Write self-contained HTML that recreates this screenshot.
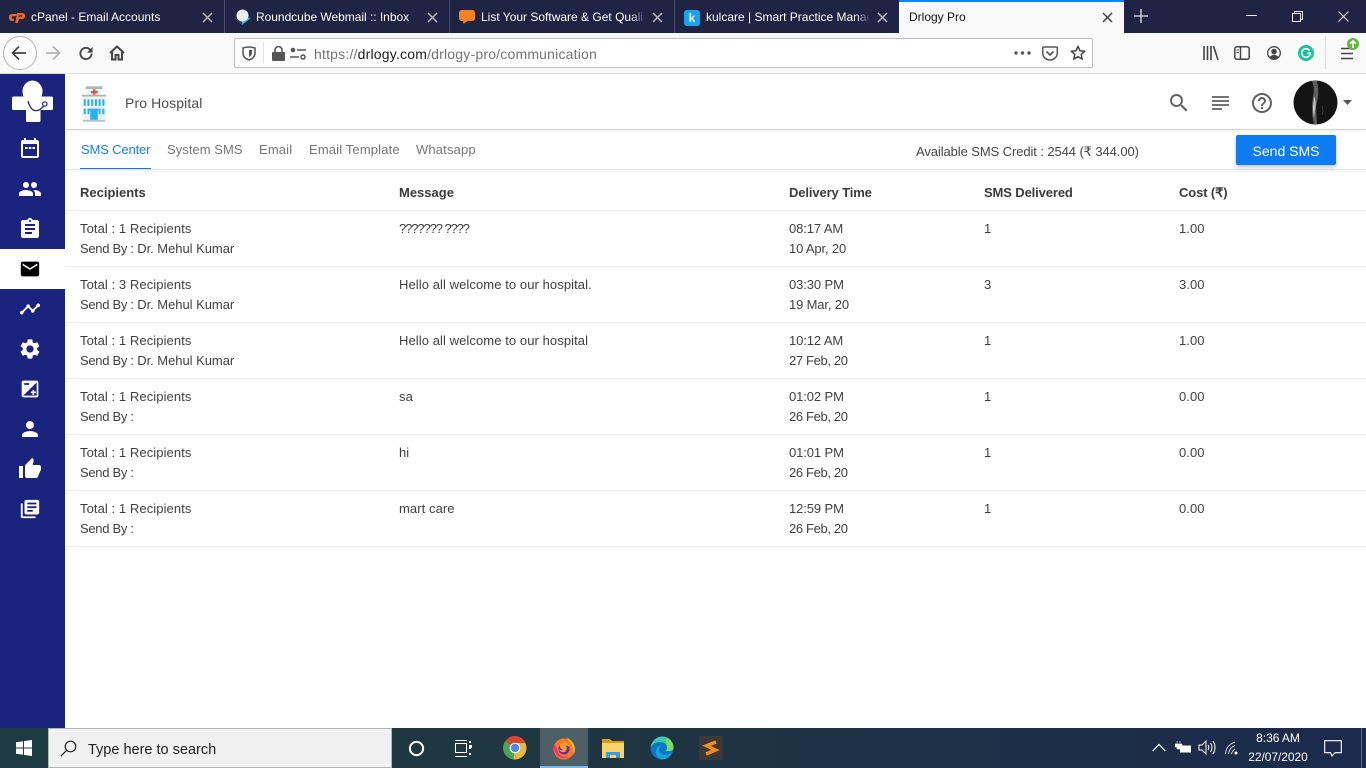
<!DOCTYPE html>
<html><head><meta charset="utf-8"><title>Drlogy Pro</title>
<style>
html,body{margin:0;padding:0;width:1366px;height:768px;overflow:hidden;background:#fff;font-family:"Liberation Sans",sans-serif}
.a{position:absolute;white-space:nowrap}
svg{position:absolute;display:block}
.tab{position:absolute;top:0;height:33px;color:#fff;font-size:12px;line-height:35px;white-space:nowrap}
.sep{position:absolute;top:0;width:1px;height:33px;background:#4a4e6b}
.x{position:absolute;top:11px;width:11px;height:11px}
.t{position:absolute;white-space:nowrap;font-size:13px;line-height:16px;color:#3f3f3f;letter-spacing:.08px}
.h{position:absolute;white-space:nowrap;font-size:13px;line-height:16px;color:#3b3b3b;font-weight:bold;top:185px;letter-spacing:-.12px}
.l{position:absolute;left:66px;width:1300px;height:1px;background:#e9ecef}
.n{position:absolute;white-space:nowrap;top:142px;font-size:13px;line-height:16px;color:#757575;letter-spacing:.15px}
.sb{letter-spacing:-.04px}.sb span{letter-spacing:-.3px}
.tm{letter-spacing:-.1px}.d1{letter-spacing:-.15px}.d2{letter-spacing:-.35px}
</style></head><body>

<!-- tab bar -->
<div class="a" style="left:0;top:0;width:1366px;height:33px;background:#1f2344"></div>
<div class="sep" style="left:224px"></div><div class="sep" style="left:449px"></div><div class="sep" style="left:674px"></div>
<div class="a" style="left:899px;top:0;width:225px;height:33px;background:#f9f9fa"></div>
<div class="a" style="left:899px;top:0;width:225px;height:2px;background:#0a84ff"></div>

<svg style="left:9px;top:13px" width="16" height="10" viewBox="0 0 16 10"><path d="M3 1h5l-.7 2.200H4q-1.200 0-1.200 1.300T4 5.800h1.300L4.600 8H3Q0 8 0 4.500T3 1z" fill="#f26522"/><path fill-rule="evenodd" d="M8.200 0H13q3 0 3 3t-3 3H10L8.800 10H6.200zM9.900 2.200l-.5 1.600h3q.9 0 .9-.9 0-.7-.9-.7z" fill="#f26522"/></svg>
<div class="tab" style="left:31px">cPanel - Email Accounts</div>
<svg class="x" style="left:202px;top:12px" viewBox="0 0 11 11"><path d="M1 1l9 9M10 1l-9 9" stroke="#b9bac6" stroke-width="1.500"/></svg>

<svg style="left:234px;top:9px" width="17" height="17" viewBox="0 0 17 17"><path d="M0 9l8 7V8z" fill="#37474f"/><path d="M8 16l9-7-9-2z" fill="#37a6e8"/><circle cx="8.500" cy="6.500" r="6" fill="#e9eef1"/></svg>
<div class="tab" style="left:256px;letter-spacing:-.03px">Roundcube Webmail :: Inbox</div>
<svg class="x" style="left:427px;top:12px" viewBox="0 0 11 11"><path d="M1 1l9 9M10 1l-9 9" stroke="#b9bac6" stroke-width="1.500"/></svg>

<svg style="left:459px;top:10px" width="16" height="14" viewBox="0 0 16 14"><path d="M3 0h10q3 0 3 3v5q0 3-3 3H8.500L4.500 14l-.5-3H3q-3 0-3-3V3q0-3 3-3z" fill="#f58220"/></svg>
<div class="tab" style="left:481px;width:163px;overflow:hidden">List Your Software &amp; Get Qualif</div>
<div class="a" style="left:630px;top:8px;width:16px;height:20px;background:linear-gradient(90deg,rgba(31,35,68,0),#1f2344)"></div>
<svg class="x" style="left:652px;top:12px" viewBox="0 0 11 11"><path d="M1 1l9 9M10 1l-9 9" stroke="#b9bac6" stroke-width="1.500"/></svg>

<div class="a" style="left:684px;top:10px;width:16px;height:16px;border-radius:3px;background:#12a5f4;color:#fff;font-size:12px;font-weight:bold;line-height:16px;text-align:center">k</div>
<div class="tab" style="left:706px;width:163px;overflow:hidden">kulcare | Smart Practice Manag</div>
<div class="a" style="left:856px;top:8px;width:14px;height:20px;background:linear-gradient(90deg,rgba(31,35,68,0),#1f2344)"></div>
<svg class="x" style="left:877px;top:12px" viewBox="0 0 11 11"><path d="M1 1l9 9M10 1l-9 9" stroke="#b9bac6" stroke-width="1.500"/></svg>

<div class="tab" style="left:909px;color:#111">Drlogy Pro</div>
<svg class="x" style="left:1102px;top:12px" viewBox="0 0 11 11"><path d="M1 1l9 9M10 1l-9 9" stroke="#444" stroke-width="1.500"/></svg>
<svg style="left:1134px;top:9px" width="14" height="14" viewBox="0 0 14 14"><path d="M7 0v14M0 7h14" stroke="#c4c5d0" stroke-width="1.600"/></svg>
<svg style="left:1246px;top:15px" width="11" height="2"><rect width="11" height="1" fill="#e8e8ee"/></svg>
<svg style="left:1292px;top:11px" width="11" height="11" viewBox="0 0 11 11"><path d="M.5 2.500h8v8h-8zM2.500 2.500v-2h8v8h-2" fill="none" stroke="#e8e8ee"/></svg>
<svg style="left:1338px;top:11px" width="11" height="11" viewBox="0 0 11 11"><path d="M.5.500l10 10M10.500.500l-10 10" stroke="#e8e8ee"/></svg>

<!-- toolbar -->
<div class="a" style="left:0;top:33px;width:1366px;height:40px;background:#f9f9fa"></div>
<div class="a" style="left:0;top:73px;width:1366px;height:1px;background:#dcdcde"></div>
<div class="a" style="left:3px;top:36px;width:32px;height:32px;border:1px solid #b5b5b6;border-radius:50%;background:#fbfbfb"></div>
<svg style="left:11px;top:45px" width="16" height="16" viewBox="0 0 16 16"><path d="M15 8H2M8 1.500L1.500 8 8 14.500" fill="none" stroke="#444" stroke-width="1.700"/></svg>
<svg style="left:45px;top:45px" width="16" height="16" viewBox="0 0 16 16"><path d="M1 8h13M8 1.500L14.500 8 8 14.500" fill="none" stroke="#b4b4b5" stroke-width="1.700"/></svg>
<svg style="left:78px;top:46px" width="16" height="15" viewBox="0 0 16 16"><path d="M14 8a6 6 0 1 1-2-4.500L14 5.500" fill="none" stroke="#444" stroke-width="2"/><path d="M15 1v6H9z" fill="#444"/></svg>
<svg style="left:109px;top:45px" width="16" height="16" viewBox="0 0 16 16"><path d="M1 8l7-6.500L15 8M3 7v7.500h3.500V10h3v4.500H13V7" fill="none" stroke="#444" stroke-width="2"/></svg>

<div class="a" style="left:234px;top:38px;width:857px;height:28px;background:#fff;border:1px solid #bcbcbd;border-radius:2px"></div>
<svg style="left:242px;top:46px" width="14" height="15" viewBox="0 0 14 15"><path d="M1 2q6-2 12 0v5q0 5-6 7-6-2-6-7z" fill="none" stroke="#555" stroke-width="1.500"/><path d="M7 4h3v3q0 2.500-3 4z" fill="#555"/></svg>
<div class="a" style="left:263px;top:42px;width:1px;height:21px;background:#e2e2e3"></div>
<svg style="left:272px;top:46px" width="13" height="15" viewBox="0 0 13 15"><path d="M3 6V4a3.500 3.500 0 0 1 7 0v2" fill="none" stroke="#555" stroke-width="1.600"/><rect y="6" width="13" height="9" rx="1" fill="#555"/></svg>
<svg style="left:290px;top:47px" width="16" height="13" viewBox="0 0 16 13"><circle cx="3" cy="3" r="2.300" fill="#555"/><path d="M7 3h9M0 10h9" stroke="#555" stroke-width="1.500"/><circle cx="13" cy="10" r="2" fill="none" stroke="#555" stroke-width="1.500"/></svg>
<div class="a" style="left:314px;top:46px;font-size:14px;line-height:17px;color:#737373;letter-spacing:.2px">https://<span style="color:#1c1c1c">drlogy.com</span>/drlogy-pro/communication</div>
<svg style="left:1014px;top:51px" width="17" height="4"><circle cx="2" cy="2" r="1.700" fill="#555"/><circle cx="8.500" cy="2" r="1.700" fill="#555"/><circle cx="15" cy="2" r="1.700" fill="#555"/></svg>
<svg style="left:1042px;top:46px" width="16" height="15" viewBox="0 0 16 15"><path d="M1.500 1h13q.8 0 .8.8V7a7.300 7 0 0 1-14.600 0V1.800q0-.8.8-.8z" fill="none" stroke="#555" stroke-width="1.500"/><path d="M4.500 5.500L8 9l3.500-3.500" fill="none" stroke="#555" stroke-width="1.600"/></svg>
<svg style="left:1070px;top:45px" width="16" height="16" viewBox="0 0 16 16"><path d="M8 1.300l2 4.400 4.800.5-3.600 3.200 1 4.700L8 11.700l-4.200 2.400 1-4.700L1.200 6.200 6 5.700z" fill="none" stroke="#444" stroke-width="1.500" stroke-linejoin="round"/></svg>

<svg style="left:1203px;top:46px" width="16" height="14" viewBox="0 0 16 14"><path d="M1 0v14M4.500 0v14M8 0v14M10.500 0l4.500 14" stroke="#444" stroke-width="1.600"/></svg>
<svg style="left:1234px;top:46px" width="16" height="14" viewBox="0 0 16 14"><rect x=".8" y=".8" width="14.400" height="12.400" rx="2" fill="none" stroke="#444" stroke-width="1.500"/><path d="M6.500 1v12" stroke="#444" stroke-width="1.500"/><path d="M2.500 4h2.500M2.500 6.500h2.500" stroke="#444"/></svg>
<svg style="left:1267px;top:46px" width="14" height="14" viewBox="0 0 14 14"><circle cx="7" cy="7" r="6.300" fill="none" stroke="#444" stroke-width="1.300"/><circle cx="7" cy="5.500" r="2.800" fill="#444"/><path d="M2.500 11q4.500-4.500 9 0-4.500 3.500-9 0z" fill="#444"/></svg>
<svg style="left:1298px;top:45px" width="16" height="16" viewBox="0 0 16 16"><circle cx="8" cy="8" r="8" fill="#15c39a"/><path d="M11.500 5.500A4.300 4.300 0 1 0 12.300 8H9.500" fill="none" stroke="#fff" stroke-width="1.600"/></svg>
<div class="a" style="left:1325px;top:36px;width:1px;height:33px;background:#e0e0e1"></div>
<svg style="left:1341px;top:47px" width="12" height="13" viewBox="0 0 12 13"><path d="M0 1.500h12M0 6.500h12M0 11.500h12" stroke="#444" stroke-width="1.500"/></svg>
<svg style="left:1347px;top:38px" width="12" height="12" viewBox="0 0 12 12"><circle cx="6" cy="6" r="6" fill="#5fb83d"/><path d="M6 10V3M3 5.800L6 2.800l3 3" fill="none" stroke="#fff" stroke-width="1.500"/></svg>

<!-- sidebar -->
<div class="a" style="left:0;top:74px;width:65px;height:654px;background:#1a237e"></div>
<svg style="left:0;top:74px" width="65" height="56" viewBox="0 0 65 56">
<ellipse cx="32.500" cy="17.500" rx="10" ry="11" fill="#fff"/>
<path d="M13.500 22.500H51.500q1.500 0 1.500 1.500V34.500q0 1.500-1.500 1.500H40.500V46.500q0 1.500-1.500 1.500H27.500q-1.500 0-1.500-1.500V36H13.500Q12 36 12 34.500V24q0-1.500 1.500-1.500z" fill="#fff"/>
<path d="M28 27q2 8 6.500 9.500 5 1 9-4.500" fill="none" stroke="#1a237e" stroke-width="1.300"/><circle cx="44.800" cy="30" r="2.200" fill="#fff" stroke="#1a237e" stroke-width="1.200"/>
</svg>
<svg style="left:18px;top:137px" width="24" height="24" viewBox="0 0 24 24"><path fill="#fff" d="M19 3h-1V1h-2v2H8V1H6v2H5C3.900 3 3 3.900 3 5v14c0 1.100.9 2 2 2h14c1.100 0 2-.9 2-2V5c0-1.100-.9-2-2-2z"/><path fill="#1a237e" d="M5 7h14v12H5z"/><path fill="#fff" d="M7 10h2.500v2H7zM10.800 10h2.500v2h-2.500zM14.500 10H17v2h-2.500z"/></svg>
<svg style="left:18px;top:177px" width="24" height="24" viewBox="0 0 24 24"><path fill="#fff" d="M16 11c1.660 0 2.990-1.340 2.990-3S17.660 5 16 5c-1.660 0-3 1.340-3 3s1.340 3 3 3zm-8 0c1.660 0 2.990-1.340 2.990-3S9.660 5 8 5C6.340 5 5 6.340 5 8s1.340 3 3 3zm0 2c-2.330 0-7 1.170-7 3.500V19h14v-2.500c0-2.330-4.670-3.500-7-3.500zm8 0c-.29 0-.62.02-.97.05 1.160.84 1.970 1.970 1.970 3.450V19h6v-2.500c0-2.330-4.670-3.500-7-3.500z"/></svg>
<svg style="left:18px;top:217px" width="24" height="24" viewBox="0 0 24 24"><path fill="#fff" d="M19 3h-4.180C14.400 1.840 13.300 1 12 1c-1.300 0-2.400.84-2.820 2H5c-1.100 0-2 .9-2 2v14c0 1.100.9 2 2 2h14c1.100 0 2-.9 2-2V5c0-1.100-.9-2-2-2zm-7 0c.55 0 1 .45 1 1s-.45 1-1 1-1-.45-1-1 .45-1 1-1zm2 14H7v-2h7v2zm3-4H7v-2h10v2zm0-4H7V7h10v2z"/></svg>
<div class="a" style="left:0;top:249px;width:65px;height:40px;background:#fff"></div>
<svg style="left:19px;top:258px" width="22" height="22" viewBox="0 0 24 24"><path fill="#000" d="M20 4H4c-1.100 0-1.990.9-1.990 2L2 18c0 1.100.9 2 2 2h16c1.100 0 2-.9 2-2V6c0-1.100-.9-2-2-2zm0 4l-8 5-8-5V6l8 5 8-5v2z"/></svg>
<svg style="left:19px;top:298px" width="22" height="22" viewBox="0 0 24 24"><path fill="#fff" d="M23 8c0 1.100-.9 2-2 2-.18 0-.35-.02-.51-.07l-3.560 3.550c.05.16.07.34.07.52 0 1.100-.9 2-2 2s-2-.9-2-2c0-.18.02-.36.07-.52l-2.550-2.550c-.16.05-.34.07-.52.07s-.36-.02-.52-.07l-4.550 4.560c.05.16.07.33.07.51 0 1.100-.9 2-2 2s-2-.9-2-2 .9-2 2-2c.18 0 .35.02.51.07l4.560-4.550C8.020 9.360 8 9.180 8 9c0-1.100.9-2 2-2s2 .9 2 2c0 .18-.02.36-.07.52l2.550 2.550c.16-.05.34-.07.52-.07s.36.02.52.07l3.550-3.560C19.020 8.350 19 8.180 19 8c0-1.100.9-2 2-2s2 .9 2 2z"/></svg>
<svg style="left:18px;top:337px" width="24" height="24" viewBox="0 0 24 24"><path fill="#fff" d="M19.140 12.940c.04-.3.06-.61.06-.94 0-.32-.02-.64-.07-.94l2.030-1.580c.18-.14.23-.41.12-.61l-1.920-3.320c-.12-.22-.37-.29-.59-.22l-2.390.96c-.5-.38-1.030-.7-1.620-.94l-.36-2.540c-.04-.24-.24-.41-.48-.41h-3.840c-.24 0-.43.17-.47.41l-.36 2.540c-.59.24-1.130.57-1.620.94l-2.390-.96c-.22-.08-.47 0-.59.22L2.740 8.870c-.12.21-.08.47.12.61l2.030 1.580c-.05.3-.09.63-.09.94s.02.64.07.94l-2.030 1.580c-.18.14-.23.41-.12.61l1.920 3.320c.12.22.37.29.59.22l2.390-.96c.5.38 1.030.7 1.620.94l.36 2.540c.05.24.24.41.48.41h3.840c.24 0 .44-.17.47-.41l.36-2.540c.59-.24 1.130-.56 1.620-.94l2.390.96c.22.08.47 0 .59-.22l1.920-3.320c.12-.22.07-.47-.12-.61l-2.010-1.580zM12 15.600c-1.980 0-3.600-1.620-3.600-3.600s1.620-3.600 3.600-3.600 3.600 1.620 3.600 3.600-1.620 3.600-3.600 3.600z"/></svg>
<svg style="left:20px;top:379px" width="20" height="20" viewBox="0 0 24 24"><path fill="#fff" d="M15 17v2h2v-2h2v-2h-2v-2h-2v2h-2v2h2zm5-15H4c-1.100 0-2 .9-2 2v16c0 1.100.9 2 2 2h16c1.100 0 2-.9 2-2V4c0-1.100-.9-2-2-2zM5 5h6v2H5V5zm15 15H4L20 4v16z"/></svg>
<svg style="left:18px;top:417px" width="24" height="24" viewBox="0 0 24 24"><path fill="#fff" d="M12 12c2.210 0 4-1.790 4-4s-1.790-4-4-4-4 1.790-4 4 1.790 4 4 4zm0 2c-2.670 0-8 1.340-8 4v2h16v-2c0-2.660-5.330-4-8-4z"/></svg>
<svg style="left:18px;top:457px" width="24" height="24" viewBox="0 0 24 24"><path fill="#fff" d="M1 21h4V9H1v12zm22-11c0-1.100-.9-2-2-2h-6.310l.95-4.570.03-.32c0-.41-.17-.79-.44-1.060L14.170 1 7.590 7.590C7.220 7.950 7 8.450 7 9v10c0 1.100.9 2 2 2h9c.83 0 1.540-.5 1.840-1.220l3.020-7.050c.09-.23.14-.47.14-.73v-2z"/></svg>
<svg style="left:19px;top:498px" width="22" height="22" viewBox="0 0 24 24"><path fill="#fff" d="M4 6H2v14c0 1.100.9 2 2 2h14v-2H4V6zm16-4H8c-1.100 0-2 .9-2 2v12c0 1.100.9 2 2 2h12c1.100 0 2-.9 2-2V4c0-1.100-.9-2-2-2zm-1 9H9V9h10v2zm-4 4H9v-2h6v2zm4-8H9V5h10v2z"/></svg>

<!-- header -->
<svg style="left:81px;top:84px" width="27" height="40" viewBox="0 0 29 40">
<rect x="5" y="1" width="18" height="3" fill="#a9b8be"/><rect x="7" y="4" width="14" height="6" fill="#eaf3f6"/>
<path d="M13 4h2.500v2H18v2.500h-2.500V11H13V8.500h-2.500V6H13z" fill="#f0512d"/>
<rect x="1" y="11" width="26" height="27" fill="#eef4f6"/><rect x="1" y="10" width="26" height="2" fill="#a9b8be"/>
<path d="M4 15v7M8 15v7M12 15v7M16 15v7M20 15v7M24 15v7M4 25v6M8 25v6M20 25v6M24 25v6" stroke="#29b0ee" stroke-width="2.200"/>
<rect x="10" y="27" width="8" height="10" fill="#29b0ee"/><rect x="9" y="25" width="10" height="2" fill="#29b0ee"/>
<rect x="2" y="37" width="24" height="2" fill="#b4c2c8"/></svg>
<div class="a" style="left:125px;top:95px;font-size:14px;line-height:17px;color:#4a4a4a;letter-spacing:.1px">Pro Hospital</div>
<div class="a" style="left:66px;top:129px;width:1300px;height:1px;background:#d4d4d4;box-shadow:0 1px 2px rgba(0,0,0,.12)"></div>
<svg style="left:1167px;top:91px" width="24" height="24" viewBox="0 0 24 24"><path fill="#616161" d="M15.500 14h-.79l-.28-.27C15.410 12.590 16 11.110 16 9.500 16 5.910 13.090 3 9.500 3S3 5.910 3 9.500 5.910 16 9.500 16c1.610 0 3.090-.59 4.230-1.570l.27.28v.79l5 4.990L20.490 19l-4.990-5zm-6 0C7.010 14 5 11.990 5 9.500S7.010 5 9.500 5 14 7.010 14 9.500 11.990 14 9.500 14z"/></svg>
<svg style="left:1212px;top:96px" width="17" height="14" viewBox="0 0 17 14"><path d="M0 1h17M0 5h17M0 9h17M0 13h10" stroke="#616161" stroke-width="1.700"/></svg>
<svg style="left:1250px;top:91px" width="24" height="24" viewBox="0 0 24 24"><path fill="#616161" d="M11 18h2v-2h-2v2zm1-16C6.480 2 2 6.480 2 12s4.480 10 10 10 10-4.480 10-10S17.520 2 12 2zm0 18c-4.410 0-8-3.590-8-8s3.590-8 8-8 8 3.590 8 8-3.590 8-8 8zm0-14c-2.210 0-4 1.790-4 4h2c0-1.100.9-2 2-2s2 .9 2 2c0 2-3 1.750-3 5h2c0-2.250 3-2.500 3-5 0-2.210-1.790-4-4-4z"/></svg>
<svg style="left:1293px;top:80px" width="45" height="45" viewBox="0 0 45 45"><circle cx="22.500" cy="22.500" r="22" fill="#141414"/><path d="M19 1q3 8 1 16l-1 10q0 10 2 17h3l-1-17 2-10q1-8-1-16z" fill="#5e5e5e"/><path d="M21 16l-1 11q0 7 1 11l1.500-12q.5-6-1.500-10z" fill="#c4c4c4"/><path d="M29 26q2 5 0 9" fill="none" stroke="#3a3a3a"/></svg>
<svg style="left:1343px;top:100px" width="9" height="5"><path d="M0 0h9L4.500 5z" fill="#555"/></svg>

<!-- subnav -->
<div class="n" style="left:81px;color:#1a7df0;letter-spacing:-.15px">SMS Center</div>
<div class="a" style="left:80px;top:168px;width:71px;height:2px;background:#0d7bf2"></div>
<div class="n" style="left:167px;letter-spacing:.05px">System SMS</div>
<div class="n" style="left:259px">Email</div>
<div class="n" style="left:309px">Email Template</div>
<div class="n" style="left:416px">Whatsapp</div>
<div class="a" style="left:66px;top:169px;width:1300px;height:1px;background:#e4e4e4;box-shadow:0 1px 2px rgba(0,0,0,.1)"></div>
<div class="t" style="left:916px;top:144px;color:#444;letter-spacing:-.09px">Available SMS Credit : 2544 (₹ 344.00)</div>
<div class="a" style="left:1236px;top:135px;width:100px;height:30px;background:#0d7bf2;border-radius:2px;box-shadow:0 2px 4px rgba(0,0,0,.25);color:#fff;font-size:14px;line-height:32px;text-align:center">Send SMS</div>

<!-- table -->
<div class="h" style="left:80px;letter-spacing:0">Recipients</div>
<div class="h" style="left:399px;letter-spacing:0">Message</div>
<div class="h" style="left:789px">Delivery Time</div>
<div class="h" style="left:984px">SMS Delivered</div>
<div class="h" style="left:1179px">Cost (₹)</div>
<div class="l" style="top:210px"></div><div class="l" style="top:266px"></div><div class="l" style="top:322px"></div><div class="l" style="top:378px"></div><div class="l" style="top:434px"></div><div class="l" style="top:490px"></div><div class="l" style="top:546px"></div>

<div class="t" style="left:80px;top:221px">Total : 1 Recipients</div><div class="t sb" style="left:80px;top:241px"><span>Send By :</span> Dr. Mehul Kumar</div>
<div class="t" style="left:399px;top:221px;letter-spacing:-1.100px">??????? ????</div>
<div class="t tm" style="left:789px;top:221px">08:17 AM</div><div class="t d1" style="left:789px;top:241px">10 Apr, 20</div>
<div class="t" style="left:984px;top:221px">1</div><div class="t" style="left:1179px;top:221px">1.00</div>

<div class="t" style="left:80px;top:277px">Total : 3 Recipients</div><div class="t sb" style="left:80px;top:297px"><span>Send By :</span> Dr. Mehul Kumar</div>
<div class="t" style="left:399px;top:277px">Hello all welcome to our hospital.</div>
<div class="t tm" style="left:789px;top:277px">03:30 PM</div><div class="t d1" style="left:789px;top:297px">19 Mar, 20</div>
<div class="t" style="left:984px;top:277px">3</div><div class="t" style="left:1179px;top:277px">3.00</div>

<div class="t" style="left:80px;top:333px">Total : 1 Recipients</div><div class="t sb" style="left:80px;top:353px"><span>Send By :</span> Dr. Mehul Kumar</div>
<div class="t" style="left:399px;top:333px">Hello all welcome to our hospital</div>
<div class="t tm" style="left:789px;top:333px">10:12 AM</div><div class="t d2" style="left:789px;top:353px">27 Feb, 20</div>
<div class="t" style="left:984px;top:333px">1</div><div class="t" style="left:1179px;top:333px">1.00</div>

<div class="t" style="left:80px;top:389px">Total : 1 Recipients</div><div class="t sb" style="left:80px;top:409px"><span>Send By :</span></div>
<div class="t" style="left:399px;top:389px">sa</div>
<div class="t tm" style="left:789px;top:389px">01:02 PM</div><div class="t d2" style="left:789px;top:409px">26 Feb, 20</div>
<div class="t" style="left:984px;top:389px">1</div><div class="t" style="left:1179px;top:389px">0.00</div>

<div class="t" style="left:80px;top:445px">Total : 1 Recipients</div><div class="t sb" style="left:80px;top:465px"><span>Send By :</span></div>
<div class="t" style="left:399px;top:445px">hi</div>
<div class="t tm" style="left:789px;top:445px">01:01 PM</div><div class="t d2" style="left:789px;top:465px">26 Feb, 20</div>
<div class="t" style="left:984px;top:445px">1</div><div class="t" style="left:1179px;top:445px">0.00</div>

<div class="t" style="left:80px;top:501px">Total : 1 Recipients</div><div class="t sb" style="left:80px;top:521px"><span>Send By :</span></div>
<div class="t" style="left:399px;top:501px">mart care</div>
<div class="t tm" style="left:789px;top:501px">12:59 PM</div><div class="t d2" style="left:789px;top:521px">26 Feb, 20</div>
<div class="t" style="left:984px;top:501px">1</div><div class="t" style="left:1179px;top:501px">0.00</div>

<!-- taskbar -->
<div class="a" style="left:0;top:728px;width:1366px;height:40px;background:linear-gradient(90deg,#1e3a42 0,#1e3640 40%,#1d2f48 75%,#1c2a4c 100%)"></div>
<svg style="left:16px;top:740px" width="16" height="16" viewBox="0 0 16 16"><path d="M0 2.300l7-1V7.500H0zM8 1.100L16 0v7.500H8zM0 8.500h7v6.200l-7-1zM8 8.500h8V16l-8-1.100z" fill="#fff"/></svg>
<div class="a" style="left:48px;top:728px;width:344px;height:40px;background:#f1f1f1;border:1px solid #b4b6b8;box-sizing:border-box"></div>
<svg style="left:60px;top:740px" width="17" height="17" viewBox="0 0 17 17"><circle cx="10.500" cy="6.500" r="5.300" fill="none" stroke="#222" stroke-width="1.200"/><path d="M6.800 10.200L.8 16.200" stroke="#222" stroke-width="1.300"/></svg>
<div class="a" style="left:88px;top:741px;font-size:14.500px;line-height:18px;color:#222">Type here to search</div>

<svg style="left:408px;top:740px" width="17" height="17"><circle cx="8.500" cy="8.500" r="6.600" fill="none" stroke="#fff" stroke-width="2"/></svg>
<svg style="left:455px;top:740px" width="18" height="17" viewBox="0 0 18 17"><path d="M0 .5h12M0 16.500h12" stroke="#fff"/><rect x=".5" y="3.500" width="11" height="9" fill="none" stroke="#fff"/><path d="M15 1v2M15 7v2M15 13v2" stroke="#fff" stroke-width="2"/><rect x="14" y="5" width="3" height="3" fill="#fff"/></svg>

<svg style="left:503px;top:736px" width="24" height="24" viewBox="0 0 24 24"><circle cx="12" cy="12" r="11.500" fill="#e8b93a"/><path d="M12 12L2 5.500A11.500 11.500 0 0 1 22.500 7H12z" fill="#d84434"/><path d="M12 12l-10-6.500A11.500 11.500 0 0 0 10.500 23.400z" fill="#4aa657"/><circle cx="12" cy="12" r="5.300" fill="#fff"/><circle cx="12" cy="12" r="4.200" fill="#4f86ec"/></svg>

<div class="a" style="left:540px;top:728px;width:48px;height:40px;background:#4f5f68"></div>
<div class="a" style="left:540px;top:766px;width:48px;height:2px;background:#76b9ed"></div>
<svg style="left:552px;top:736px" width="24" height="24" viewBox="0 0 24 24"><circle cx="12" cy="13" r="10.500" fill="#ff7a1f"/><path d="M2 8q-1 8 4 12 6 4 13 1-10 2-13-5-1-4-4-8z" fill="#f0336a"/><path d="M14 1q6 3 8.500 9 1 5-1 8Q22 9 14 1z" fill="#ffcb32"/><circle cx="12" cy="13" r="5.500" fill="#5b2fb0"/><path d="M8 8q7-4 10 3-2-2-4-1 2 3-1 6-5 1-6-3 2 2 4 1-4-2-3-6z" fill="#ff9a2a"/></svg>

<svg style="left:602px;top:738px" width="22" height="20" viewBox="0 0 22 20"><path d="M0 1h8l2 2h12v3H0z" fill="#d69e1e"/><rect y="5" width="22" height="15" fill="#fbd267"/><path d="M4 20v-6h14v6h-4v-3H8v3z" fill="#3d9ae0"/></svg>
<svg style="left:650px;top:736px" width="24" height="24" viewBox="0 0 24 24"><circle cx="12" cy="12" r="11.500" fill="#0d74c8"/><path d="M1 9Q5 .5 12.500.5 22 1 23.500 11q0 4-3.500 4h-5q2-1 2-4Q16 6 10 6 4 6 1 11z" fill="#3cc9a6"/><path d="M16 2q7 3 7.500 9 0 4-3.500 4h-4q2-2 1-5-1-5-1-8z" fill="#7fdc5a"/><path d="M9 13q0 6 6 6 4 0 7-3-3 7-10 7.500-6-1-6-8 0-5 6-7-3 2-3 4.500z" fill="#12a5d8"/></svg>
<svg style="left:699px;top:736px" width="24" height="24" viewBox="0 0 24 24"><rect width="24" height="24" rx="2" fill="#3a3a3a"/><path d="M17 6L7.500 9.800 16.500 14 7 18" fill="none" stroke="#f78c1e" stroke-width="3.400"/></svg>

<svg style="left:1152px;top:743px" width="14" height="9" viewBox="0 0 14 9"><path d="M.7 8L7 1.500 13.300 8" fill="none" stroke="#fff" stroke-width="1.200"/></svg>
<svg style="left:1175px;top:741px" width="17" height="13" viewBox="0 0 17 13"><path d="M2 0v3M5 0v3M0 3h7v3H5v2H2V6H0z" fill="#fff" stroke="#fff" stroke-width=".5"/><rect x="5" y="4.500" width="11" height="7" fill="#fff"/></svg>
<svg style="left:1198px;top:740px" width="18" height="15" viewBox="0 0 18 15"><path d="M1 5h3l4-4v13l-4-4H1z" fill="none" stroke="#fff"/><path d="M10 5q1.500 2.500 0 5M12.500 3q3 4.500 0 9M15 1q4 6.500 0 13" fill="none" stroke="#fff"/></svg>
<svg style="left:1225px;top:741px" width="15" height="14" viewBox="0 0 15 14"><path d="M.5 13Q1 4 10 1M3.500 13Q4 7 10 4.500M6.500 13Q7 10 10 8" fill="none" stroke="#c7ccd6"/><circle cx="11" cy="12" r="1.500" fill="#fff"/></svg>
<div class="a" style="left:1238px;top:729px;width:80px;text-align:center;font-size:12px;line-height:19px;color:#fff;letter-spacing:-.05px">8:36 AM<br>22/07/2020</div>
<svg style="left:1324px;top:740px" width="18" height="17" viewBox="0 0 18 17"><path d="M.7.700h16.600v12H11L8 16 6.500 12.700H.7z" fill="none" stroke="#fff" stroke-width="1.100"/></svg>
<div class="a" style="left:1361px;top:728px;width:1px;height:40px;background:#5a6a80"></div>

</body></html>
